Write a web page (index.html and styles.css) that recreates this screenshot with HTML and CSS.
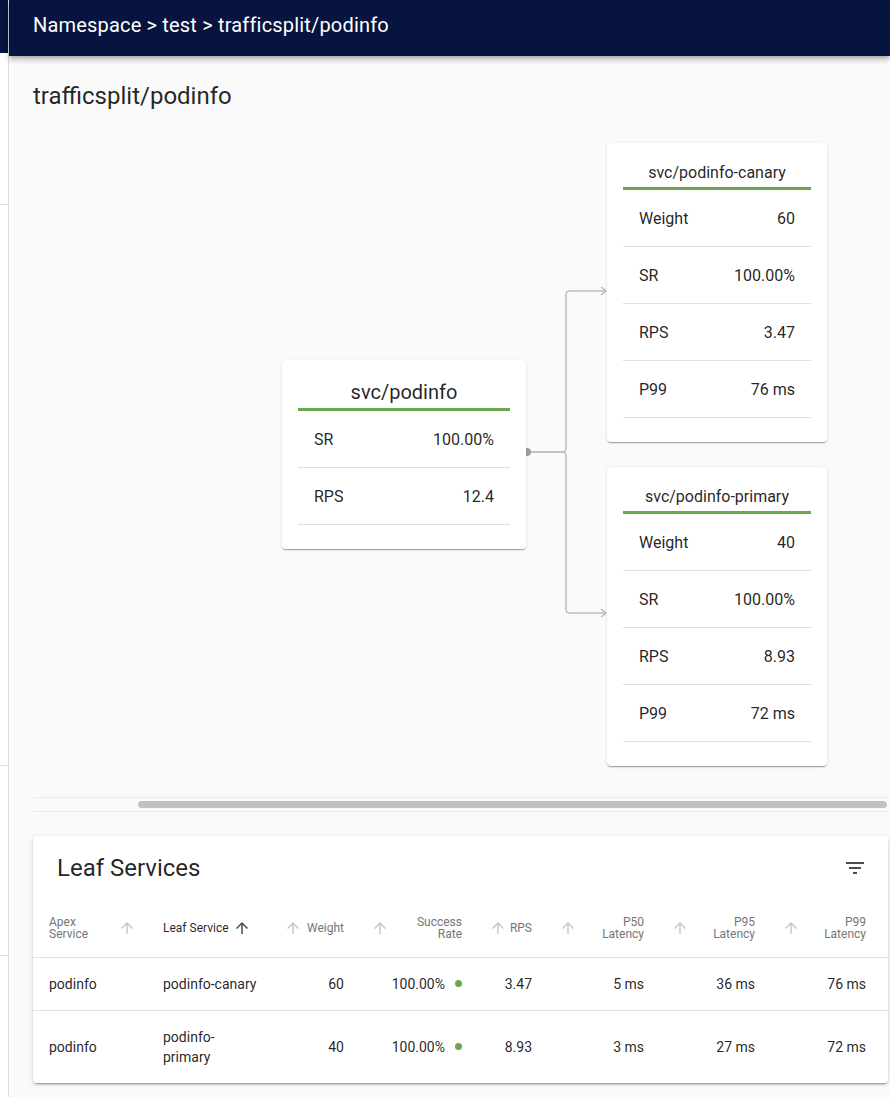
FILE: index.html
```html
<!DOCTYPE html>
<html lang="en">
<head>
<meta charset="utf-8">
<title>trafficsplit/podinfo</title>
<link rel="stylesheet" href="styles.css">
</head>
<body>
<div class="app">
  <aside class="sidebar">
    <div class="sidebar-head"></div>
    <div class="sidebar-sec sec1"></div>
    <div class="sidebar-sec sec2"></div>
    <div class="sidebar-sec sec3"></div>
  </aside>
  <div class="main">
    <header class="appbar">Namespace &gt; test &gt; trafficsplit/podinfo</header>
    <div class="content">
      <h1 class="page-title">trafficsplit/podinfo</h1>
      <div class="graph">
        <svg class="edges" width="900" height="685" viewBox="0 0 900 685">
          <path d="M494 340 H529 Q533 340 533 336 V183 Q533 179 537 179 H573" class="edge"/>
          <path d="M568 175 L573 179 L568 183" class="edge"/>
          <path d="M494 340 H529 Q533 340 533 344 V497 Q533 501 537 501 H573" class="edge"/>
          <path d="M568 497 L573 501 L568 505" class="edge"/>
          <circle cx="494" cy="340" r="4" class="dot"/>
        </svg>
        <div class="node node-apex">
          <div class="node-title">svc/podinfo</div>
          <div class="node-row"><span>SR</span><span>100.00%</span></div>
          <div class="node-row"><span>RPS</span><span>12.4</span></div>
        </div>
        <div class="node node-leaf node-canary">
          <div class="node-title">svc/podinfo-canary</div>
          <div class="node-row"><span>Weight</span><span>60</span></div>
          <div class="node-row"><span>SR</span><span>100.00%</span></div>
          <div class="node-row"><span>RPS</span><span>3.47</span></div>
          <div class="node-row"><span>P99</span><span>76 ms</span></div>
        </div>
        <div class="node node-leaf node-primary">
          <div class="node-title">svc/podinfo-primary</div>
          <div class="node-row"><span>Weight</span><span>40</span></div>
          <div class="node-row"><span>SR</span><span>100.00%</span></div>
          <div class="node-row"><span>RPS</span><span>8.93</span></div>
          <div class="node-row"><span>P99</span><span>72 ms</span></div>
        </div>
      </div>
      <div class="hscroll"><div class="hscroll-thumb"></div></div>

      <section class="card">
        <div class="toolbar">
          <h2 class="toolbar-title">Leaf Services</h2>
          <svg class="filter-icon" width="24" height="24" viewBox="0 0 24 24"><path d="M10 18h4v-2h-4v2zM3 6v2h18V6H3zm3 7h12v-2H6v2z"/></svg>
        </div>
        <table class="tbl">
          <colgroup>
            <col class="c1"><col class="c2"><col class="c3"><col class="c4"><col class="c5"><col class="c6"><col class="c7"><col class="c8"><col>
          </colgroup>
          <thead>
            <tr>
              <th><span class="sort left"><span class="lbl lbl-apex">Apex<br>Service</span><svg class="arr" viewBox="0 0 24 24"><path d="M4 12l1.41 1.41L11 7.83V20h2V7.83l5.58 5.59L20 12l-8-8-8 8z"/></svg></span></th>
              <th class="c2cell"><span class="sort left active"><span class="lbl">Leaf Service</span><svg class="arr" viewBox="0 0 24 24"><path d="M4 12l1.41 1.41L11 7.83V20h2V7.83l5.58 5.59L20 12l-8-8-8 8z"/></svg></span></th>
              <th><span class="sort right"><svg class="arr" viewBox="0 0 24 24"><path d="M4 12l1.41 1.41L11 7.83V20h2V7.83l5.58 5.59L20 12l-8-8-8 8z"/></svg><span class="lbl">Weight</span></span></th>
              <th><span class="sort right"><svg class="arr" viewBox="0 0 24 24"><path d="M4 12l1.41 1.41L11 7.83V20h2V7.83l5.58 5.59L20 12l-8-8-8 8z"/></svg><span class="lbl">Success<br>Rate</span></span></th>
              <th><span class="sort right"><svg class="arr" viewBox="0 0 24 24"><path d="M4 12l1.41 1.41L11 7.83V20h2V7.83l5.58 5.59L20 12l-8-8-8 8z"/></svg><span class="lbl">RPS</span></span></th>
              <th><span class="sort right"><svg class="arr" viewBox="0 0 24 24"><path d="M4 12l1.41 1.41L11 7.83V20h2V7.83l5.58 5.59L20 12l-8-8-8 8z"/></svg><span class="lbl">P50<br>Latency</span></span></th>
              <th><span class="sort right"><svg class="arr" viewBox="0 0 24 24"><path d="M4 12l1.41 1.41L11 7.83V20h2V7.83l5.58 5.59L20 12l-8-8-8 8z"/></svg><span class="lbl">P95<br>Latency</span></span></th>
              <th><span class="sort right"><svg class="arr" viewBox="0 0 24 24"><path d="M4 12l1.41 1.41L11 7.83V20h2V7.83l5.58 5.59L20 12l-8-8-8 8z"/></svg><span class="lbl">P99<br>Latency</span></span></th>
              <th class="filler"></th>
            </tr>
          </thead>
          <tbody>
            <tr>
              <td>podinfo</td>
              <td class="c2cell">podinfo-canary</td>
              <td class="num">60</td>
              <td class="num"><span class="sr">100.00%<i class="ok-dot"></i></span></td>
              <td class="num">3.47</td>
              <td class="num">5 ms</td>
              <td class="num">36 ms</td>
              <td class="num">76 ms</td>
              <td class="filler"></td>
            </tr>
            <tr>
              <td>podinfo</td>
              <td class="c2cell">podinfo-primary</td>
              <td class="num">40</td>
              <td class="num"><span class="sr">100.00%<i class="ok-dot"></i></span></td>
              <td class="num">8.93</td>
              <td class="num">3 ms</td>
              <td class="num">27 ms</td>
              <td class="num">72 ms</td>
              <td class="filler"></td>
            </tr>
          </tbody>
        </table>
      </section>
    </div>
  </div>
</div>
</body>
</html>
```

FILE: styles.css
```css
* { box-sizing: border-box; }
html, body { margin: 0; padding: 0; }
body {
  font-family: Roboto, "Liberation Sans", Arial, sans-serif;
  color: rgba(0, 0, 0, 0.87);
  background: #fafafa;
  overflow: hidden;
}
.app {
  display: flex;
  height: 1097px;
  overflow: hidden;
}
.sidebar {
  flex: 0 0 9px;
  width: 9px;
  background: #fff;
  border-right: 1px solid #dcdcdc;
  display: flex;
  flex-direction: column;
}
.sidebar-head { height: 53px; background: #07143f; }
.sidebar-sec { border-bottom: 1px solid #e0e0e0; }
.sec1 { height: 152px; }
.sec2 { height: 561px; }
.sec3 { height: 190px; }

.main {
  flex: 1;
  min-width: 0;
  background: #fafafa;
  display: flex;
  flex-direction: column;
}
.appbar {
  position: relative;
  z-index: 2;
  height: 56px;
  flex: 0 0 56px;
  background: #07143f;
  color: #fff;
  font-size: 20px;
  line-height: 28px;
  letter-spacing: 0.18px;
  padding: 11px 24px 0;
  box-shadow: 0 2px 4px -1px rgba(0,0,0,0.2), 0 4px 5px 0 rgba(0,0,0,0.14), 0 1px 10px 0 rgba(0,0,0,0.12);
}
.content {
  padding: 24px 2px 0 24px;
}
.page-title {
  margin: 0;
  font-size: 24px;
  line-height: 32px;
  font-weight: 400;
  color: rgba(0,0,0,0.87);
}
.graph {
  position: relative;
  height: 685px;
  overflow: hidden;
}
.edges {
  position: absolute;
  left: 0;
  top: 0;
}
.edge {
  fill: none;
  stroke: #bdbdbd;
  stroke-width: 1.5;
}
.dot { fill: #9e9e9e; }

.node {
  position: absolute;
  background: #fff;
  border-radius: 4px;
  padding: 16px 16px 24px;
  box-shadow: 0 2px 1px -1px rgba(0,0,0,0.2), 0 1px 1px 0 rgba(0,0,0,0.14), 0 1px 3px 0 rgba(0,0,0,0.12);
}
.node-title {
  text-align: center;
  border-bottom: 3px solid #6aa84f;
  font-size: 16px;
  line-height: 28px;
}
.node-apex { left: 249px; top: 248px; width: 244px; }
.node-apex .node-title { font-size: 20px; line-height: 32px; }
.node-leaf { width: 220px; }
.node-canary { left: 574px; top: 31px; }
.node-primary { left: 574px; top: 355px; }
.node-row {
  display: flex;
  justify-content: space-between;
  align-items: center;
  height: 57px;
  padding: 0 16px;
  border-bottom: 1px solid #e0e0e0;
  font-size: 16px;
}

.hscroll {
  height: 15px;
  border-top: 1px solid #ebebeb;
  border-bottom: 1px solid #ebebeb;
  padding-top: 3px;
  background: #fafafa;
}
.hscroll-thumb {
  margin-left: 105px;
  width: 749px;
  height: 7px;
  border-radius: 4px;
  background: #c1c1c1;
}

.card {
  margin-top: 24px;
  background: #fff;
  border-radius: 4px;
  box-shadow: 0 3px 1px -2px rgba(0,0,0,0.2), 0 2px 2px 0 rgba(0,0,0,0.14), 0 1px 5px 0 rgba(0,0,0,0.12);
}
.toolbar {
  height: 64px;
  display: flex;
  align-items: center;
  justify-content: space-between;
  padding: 0 21px 0 24px;
}
.toolbar-title {
  margin: 0;
  font-size: 24px;
  font-weight: 400;
  line-height: 32px;
}
.filter-icon { fill: rgba(0,0,0,0.7); display: block; }

.tbl {
  width: 100%;
  table-layout: fixed;
  border-collapse: collapse;
}
.c1 { width: 114px; }
.c2 { width: 126px; }
.c3 { width: 87px; }
.c4 { width: 118px; }
.c5 { width: 70px; }
.c6 { width: 112px; }
.c7 { width: 111px; }
.c8 { width: 111px; }
.tbl th, .tbl td {
  padding: 16px;
  border-bottom: 1px solid #e0e0e0;
  vertical-align: middle;
}
.tbl th {
  height: 57px;
  font-size: 12px;
  line-height: 12px;
  font-weight: 400;
  color: #757575;
  text-align: left;
}
.tbl td {
  font-size: 14px;
  line-height: 20px;
  text-align: left;
}
.tbl tbody tr:last-child td { border-bottom: none; }
.tbl td.num { text-align: right; }
.tbl td.c2cell, .tbl th.c2cell { padding-right: 14px; }
.filler { padding: 0 !important; }

.sort {
  display: flex;
  align-items: center;
  width: 100%;
}
.sort .arr {
  width: 18px;
  height: 18px;
  flex: 0 0 18px;
  fill: #c6c6c6;
}
.sort.left .arr { margin-left: 4px; }
.sort.right .arr { margin-left: -5px; }
.sort.right .lbl { flex: 1; text-align: right; }
.lbl-apex { flex: 0 0 65px; }
.sort.active .lbl { color: rgba(0,0,0,0.87); }
.sort.active .arr { fill: #4a4a4a; }

.sr {
  display: inline-flex;
  align-items: center;
}
.ok-dot {
  display: inline-block;
  width: 7px;
  height: 7px;
  border-radius: 50%;
  background: #6aa84f;
  margin-left: 10px;
}
```
